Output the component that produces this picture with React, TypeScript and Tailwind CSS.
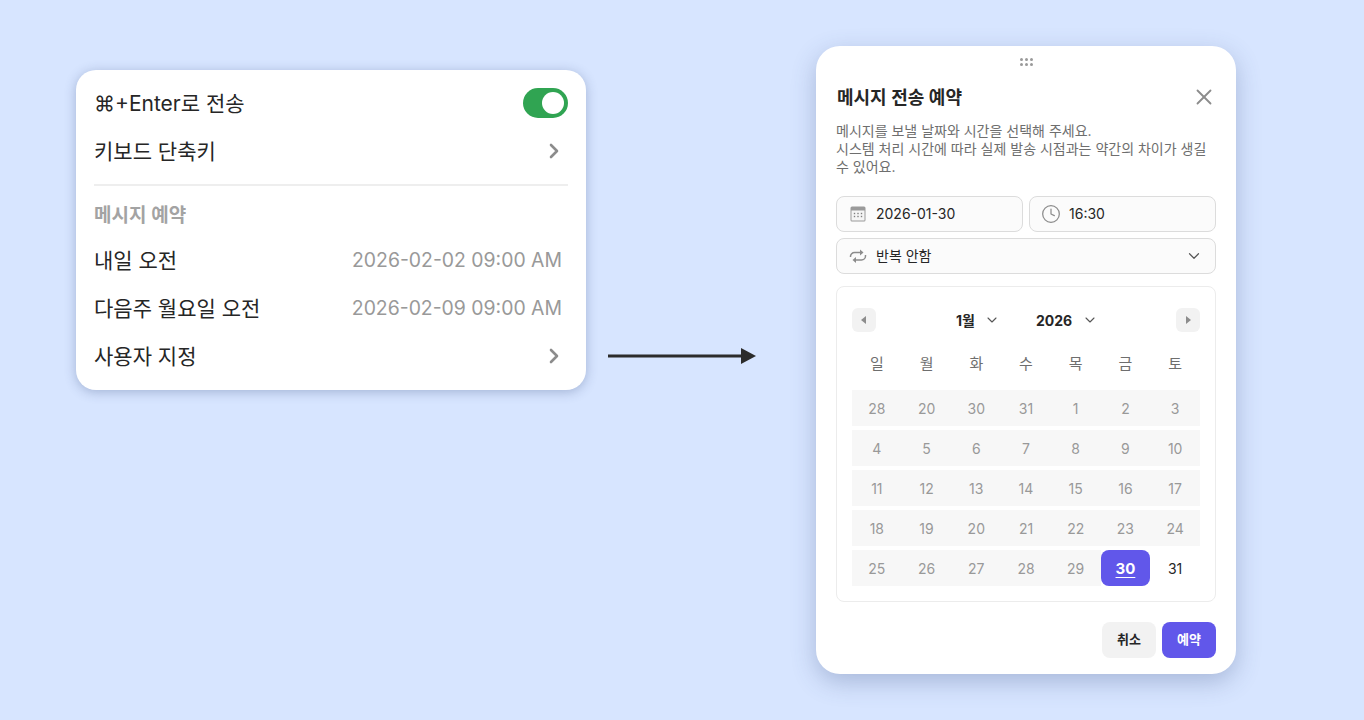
import { ChevronDown, ChevronRight, Clock, X } from "lucide-react";

const weekdays = ["일", "월", "화", "수", "목", "금", "토"];

const weeks = [
  ["28", "20", "30", "31", "1", "2", "3"],
  ["4", "5", "6", "7", "8", "9", "10"],
  ["11", "12", "13", "14", "15", "16", "17"],
  ["18", "19", "20", "21", "22", "23", "24"],
  ["25", "26", "27", "28", "29"],
];

function Row({ label, children }: { label: string; children?: React.ReactNode }) {
  return (
    <div className="flex h-12 items-center justify-between">
      <span className="pt-[1px] text-[21px] text-[#262626]">{label}</span>
      {children}
    </div>
  );
}

function CalendarIcon() {
  return (
    <svg width="16" height="16" viewBox="0 0 16 16" className="shrink-0">
      <rect x="0.5" y="0.5" width="15" height="15" rx="1.5" fill="#9a9a9a" />
      <rect x="1.5" y="4.5" width="13" height="10" fill="#f5f5f5" />
      {[4.5, 8, 11.5].map((x) =>
        [7.5, 10.5].map((y) => <rect key={`${x}-${y}`} x={x - 0.7} y={y - 0.7} width="1.4" height="1.4" fill="#808080" />)
      )}
    </svg>
  );
}

function RepeatIcon() {
  return (
    <svg width="18" height="18" viewBox="0 0 18 18" fill="none" stroke="#8c8c8c" strokeWidth="1.5" className="shrink-0">
      <path d="M1.5 10 V9.5 a4 4 0 0 1 4-4 H11" />
      <path d="M16.5 8 V9 a4 4 0 0 1-4 4 H7" />
      <path d="M11 2.5 L11 8.5 L14.5 5.5 Z" fill="#8c8c8c" stroke="none" />
      <path d="M7 10 L7 16 L3.5 13 Z" fill="#8c8c8c" stroke="none" />
    </svg>
  );
}

function Arrow() {
  return (
    <svg width="148" height="18" viewBox="0 0 148 18" className="shrink-0">
      <rect x="0" y="7.5" width="136" height="3" fill="#2b2b2b" />
      <path d="M133 1 L148 9 L133 17 Z" fill="#2b2b2b" />
    </svg>
  );
}

function Triangle({ flip }: { flip?: boolean }) {
  return (
    <div className="flex h-6 w-6 items-center justify-center rounded-md bg-[#f2f2f2]">
      <svg width="6" height="8" viewBox="0 0 6 8">
        <path d={flip ? "M1 0 L6 4 L1 8 Z" : "M5 0 L0 4 L5 8 Z"} fill="#8c8c8c" />
      </svg>
    </div>
  );
}

export default function App() {
  return (
    <div
      className="flex h-[720px] w-full items-start overflow-hidden bg-[#d7e5ff] pl-[76px]"
      style={{ fontFamily: 'Inter, "Noto Sans CJK KR", sans-serif' }}
    >
      <div className="mt-[70px] h-[320px] w-[510px] shrink-0 rounded-[20px] bg-white px-[18px] pt-[9px] shadow-[0_2px_12px_rgba(50,70,120,0.32)]">
        <Row label="⌘+Enter로 전송">
          <div className="flex h-[30px] w-[45px] items-center justify-end rounded-full bg-[#30a452] pr-[4px]">
            <div className="h-[22px] w-[22px] rounded-full bg-white" />
          </div>
        </Row>
        <Row label="키보드 단축키">
          <ChevronRight size={24} strokeWidth={2.6} className="mr-[2px] text-[#8c8c8c]" />
        </Row>
        <div className="mt-[9px] h-[2px] bg-[#eeeeee]" />
        <div className="mt-[19px] text-[19px] leading-[22px] font-semibold text-[#a3a3a3]">메시지 예약</div>
        <div className="mt-[9px]">
          <Row label="내일 오전">
            <span className="mr-[6px] pt-[1px] text-[19.4px] text-[#999999]">2026-02-02 09:00 AM</span>
          </Row>
          <Row label="다음주 월요일 오전">
            <span className="mr-[6px] pt-[1px] text-[19.4px] text-[#999999]">2026-02-09 09:00 AM</span>
          </Row>
          <Row label="사용자 지정">
            <ChevronRight size={24} strokeWidth={2.6} className="mr-[2px] text-[#8c8c8c]" />
          </Row>
        </div>
      </div>

      <div className="mt-[347px] ml-[22px] shrink-0">
        <Arrow />
      </div>

      <div className="mt-[46px] ml-[60px] h-[628px] w-[420px] shrink-0 rounded-3xl bg-white px-5 shadow-[0_8px_24px_rgba(60,80,130,0.3)]">
        <div className="flex h-[32px] items-center justify-center">
          <div className="grid grid-cols-3 gap-[2px]">
            {[0, 1, 2, 3, 4, 5].map((i) => (
              <div key={i} className="h-[3px] w-[3px] rounded-full bg-[#9a9a9a]" />
            ))}
          </div>
        </div>
        <div className="flex h-[38px] items-center justify-between">
          <span className="pt-[2px] pl-[1px] text-lg font-semibold text-[#262626]">메시지 전송 예약</span>
          <X size={26} strokeWidth={1.7} className="-mr-[1px] text-[#8c8c8c]" />
        </div>
        <p className="mt-[6px] text-sm leading-[18px] text-[#6e6e6e]">
          메시지를 보낼 날짜와 시간을 선택해 주세요.
          <br />
          시스템 처리 시간에 따라 실제 발송 시점과는 약간의 차이가 생길 수 있어요.
        </p>
        <div className="mt-[20px] grid grid-cols-2 gap-[6px]">
          <div className="flex h-9 items-center gap-[10px] rounded-lg border border-[#dcdcdc] bg-[#fbfbfb] px-[13px] text-sm text-[#262626]">
            <CalendarIcon />
            2026-01-30
          </div>
          <div className="flex h-9 items-center gap-[8px] rounded-lg border border-[#dcdcdc] bg-[#fbfbfb] px-[11px] text-sm text-[#262626]">
            <Clock size={20} strokeWidth={1.5} className="text-[#8c8c8c]" />
            16:30
          </div>
        </div>
        <div className="mt-[6px] flex h-9 items-center gap-[9px] rounded-lg border border-[#dcdcdc] bg-[#fbfbfb] px-[12px] text-sm text-[#262626]">
          <RepeatIcon />
          <span className="flex-1">반복 안함</span>
          <ChevronDown size={18} strokeWidth={1.6} className="text-[#555555]" />
        </div>

        <div className="mt-3 h-[316px] rounded-lg border border-[#ececec] px-[15px] pt-[21px]">
          <div className="flex h-6 items-center justify-between">
            <Triangle />
            <div className="flex items-center pl-[2px] text-sm font-bold text-[#262626]">
              <span className="pt-[1px]">1월</span>
              <ChevronDown size={16} strokeWidth={1.6} className="ml-[9px] text-[#555555]" />
              <span className="ml-[36px] pt-[1px]">2026</span>
              <ChevronDown size={16} strokeWidth={1.6} className="ml-[10px] text-[#555555]" />
            </div>
            <Triangle flip />
          </div>
          <div className="mt-[12px] grid h-[40px] grid-cols-7 items-center text-center text-[15px] text-[#6e6e6e]">
            {weekdays.map((d) => (
              <span key={d}>{d}</span>
            ))}
          </div>
          <div className="mt-[6px] flex flex-col gap-1">
            {weeks.map((week, i) => (
              <div key={i} className="grid h-9 grid-cols-7 text-center text-sm text-[#999999]">
                {week.map((d, j) => (
                  <span key={j} className="flex items-center justify-center bg-[#f7f7f7] pt-[2px]">
                    {d}
                  </span>
                ))}
                {i === 4 && (
                  <>
                    <span className="flex items-center justify-center rounded-lg bg-[#6157ea] pt-[2px] text-[15px] font-bold text-white underline underline-offset-[3px]">
                      30
                    </span>
                    <span className="flex items-center justify-center pt-[2px] text-[#262626]">31</span>
                  </>
                )}
              </div>
            ))}
          </div>
        </div>

        <div className="mt-5 flex justify-end gap-[6px]">
          <div className="flex h-9 w-[54px] items-center justify-center rounded-lg bg-[#f2f2f2] text-[13px] font-semibold text-[#262626]">
            취소
          </div>
          <div className="flex h-9 w-[54px] items-center justify-center rounded-lg bg-[#6157ea] text-[13px] font-semibold text-white">
            예약
          </div>
        </div>
      </div>
    </div>
  );
}
